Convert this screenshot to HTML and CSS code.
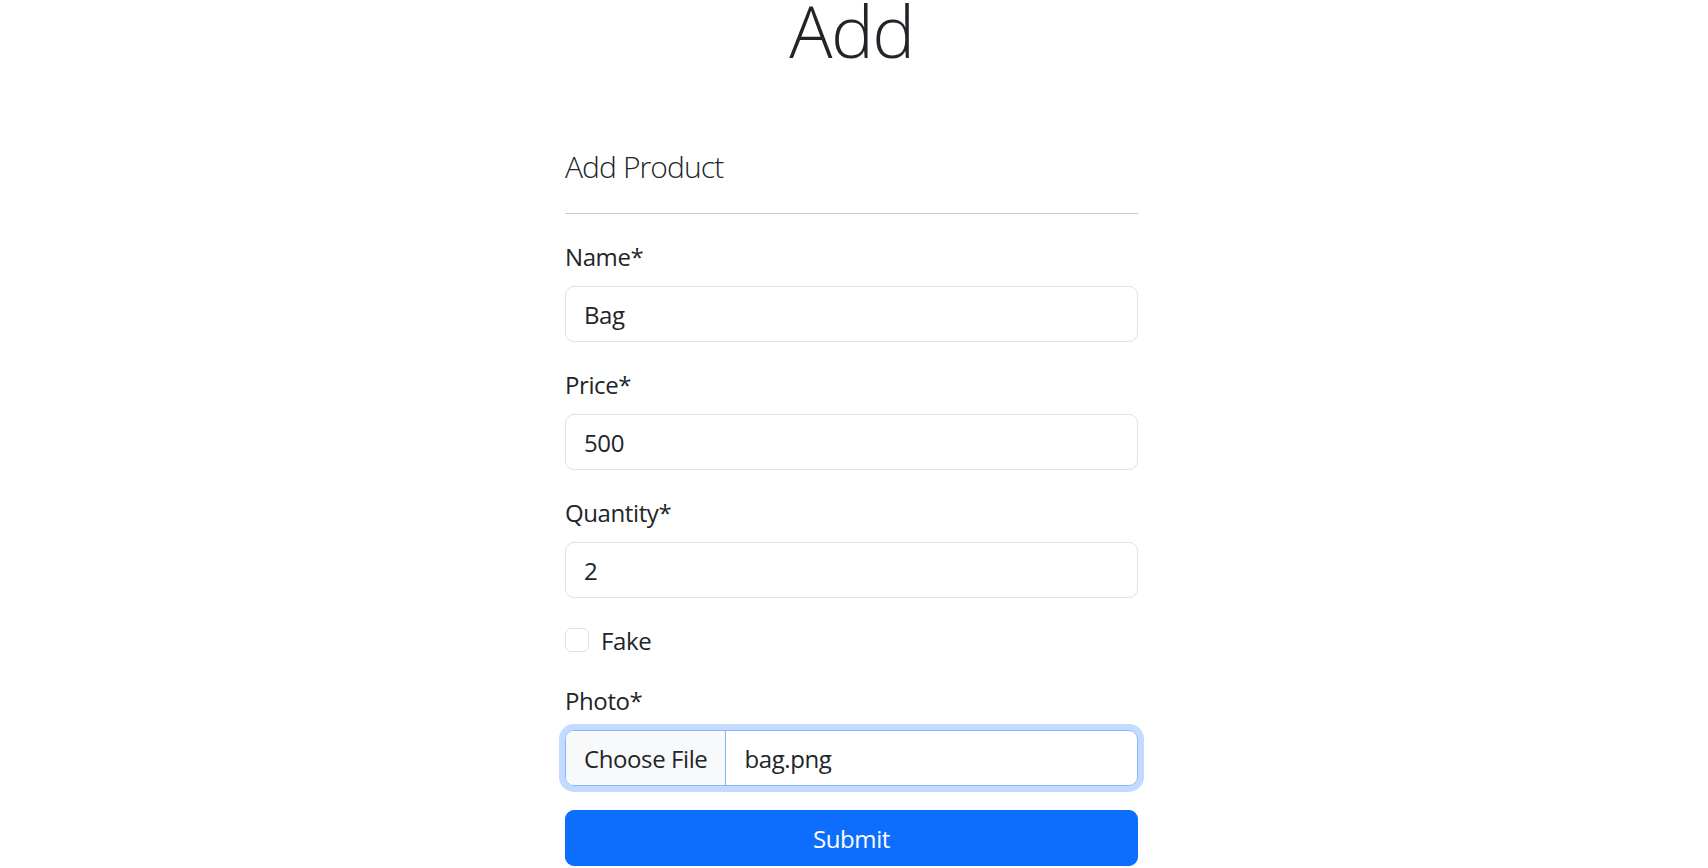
FILE: index.html
```html
<!DOCTYPE html>
<html lang="en">
<head>
<meta charset="utf-8">
<title>Add</title>
<link rel="stylesheet" href="styles.css">
</head>
<body>
<div class="page">
  <h1 class="title">Add</h1>
  <form class="form">
    <h5 class="form-title">Add Product</h5>
    <hr class="divider">
    <div class="field">
      <label class="label">Name*</label>
      <div class="control">Bag</div>
    </div>
    <div class="field">
      <label class="label">Price*</label>
      <div class="control">500</div>
    </div>
    <div class="field">
      <label class="label">Quantity*</label>
      <div class="control">2</div>
    </div>
    <div class="check">
      <span class="check-box"></span>
      <span class="check-label">Fake</span>
    </div>
    <div class="field">
      <label class="label">Photo*</label>
      <div class="control file">
        <span class="file-btn">Choose File</span>
        <span class="file-name">bag.png</span>
      </div>
    </div>
    <button type="button" class="submit">Submit</button>
  </form>
</div>
</body>
</html>
```
FILE: styles.css
```css
html, body {
  margin: 0;
  padding: 0;
  background: #fff;
}
body {
  font-family: "Open Sans", "Noto Sans", sans-serif;
  color: #212529;
  font-size: 24px;
  letter-spacing: -0.4px;
}
.page {
  padding-right: 5px;
}
.title {
  margin: 0;
  text-align: center;
  font-size: 72px;
  font-weight: 300;
  line-height: 60px;
  letter-spacing: -1.5px;
}
.form {
  width: 573px;
  margin: 0 auto;
}
.form-title {
  margin: 89px 0 0;
  font-size: 30px;
  font-weight: 300;
  line-height: 36px;
  letter-spacing: -0.9px;
}
.divider {
  margin: 28px 0 0;
  border: 0;
  border-top: 1px solid #c8c9ca;
  height: 0;
}
.field {
  margin-top: 24px;
}
.label {
  display: block;
  line-height: 36px;
  padding-top: 1px;
  margin-bottom: 11px;
}
.control {
  box-sizing: border-box;
  height: 56px;
  border: 1px solid #dee2e6;
  border-radius: 9px;
  padding: 10px 18px 8px;
  line-height: 36px;
}
.check {
  box-sizing: border-box;
  height: 36px;
  margin-top: 24px;
  display: flex;
  align-items: flex-start;
  line-height: 35px;
}
.check-box {
  box-sizing: border-box;
  width: 24px;
  height: 24px;
  margin-top: 6px;
  margin-right: 12px;
  border: 1px solid #dee2e6;
  border-radius: 6px;
}
.check-label {
  padding-top: 1px;
}
.file {
  display: flex;
  padding: 0;
  overflow: hidden;
  border-color: #86b7fe;
  box-shadow: 0 0 0 6px rgba(13, 110, 253, 0.25);
}
.file-btn {
  padding: 10px 18px 8px;
  background: #f8f9fa;
  border-right: 1px solid #86b7fe;
}
.file-name {
  padding: 10px 18px 8px;
}
.submit {
  display: block;
  box-sizing: border-box;
  width: 100%;
  height: 56px;
  margin-top: 24px;
  border: 1px solid #0d6efd;
  border-radius: 9px;
  background: #0d6efd;
  color: #fff;
  font-family: inherit;
  font-size: 24px;
  letter-spacing: -0.4px;
  line-height: 36px;
  padding: 10px 18px 8px;
}
```
